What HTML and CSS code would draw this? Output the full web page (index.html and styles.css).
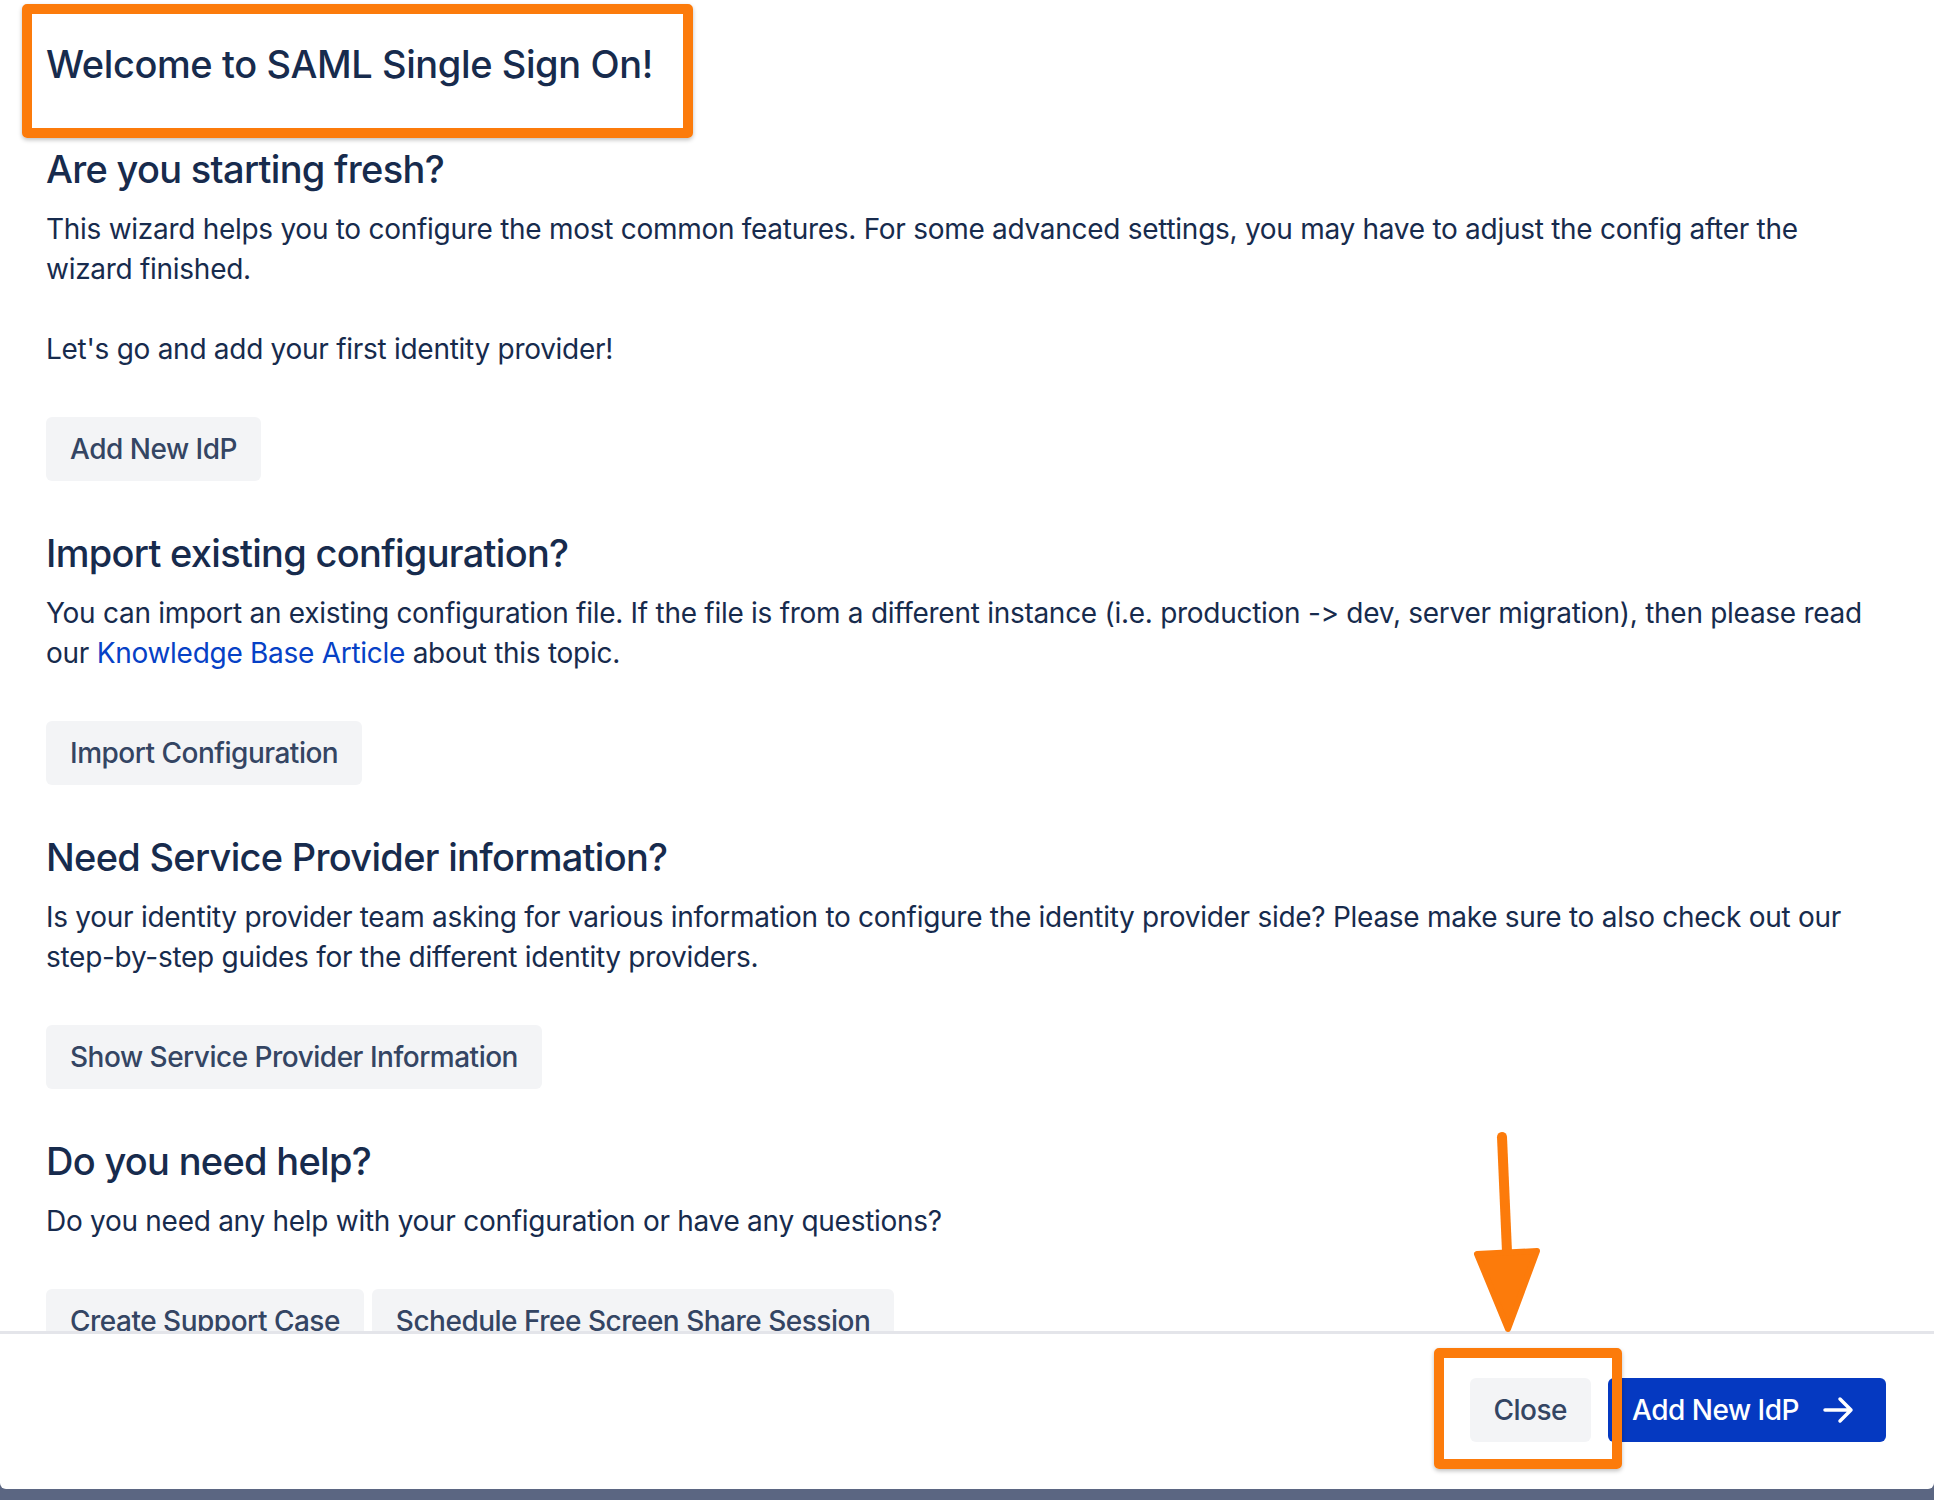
FILE: index.html
```html
<!DOCTYPE html>
<html lang="en">
<head>
    <meta charset="UTF-8">
    <title>SAML Single Sign On</title>
    <link rel="stylesheet" href="styles.css">
</head>
<body>
<div class="modal">
    <div class="modal-header">
        <h1 class="modal-title">Welcome to SAML Single Sign On!</h1>
    </div>

    <div class="modal-body">
        <section class="step">
            <h2>Are you starting fresh?</h2>
            <p>This wizard helps you to configure the most common features. For some advanced settings, you may have to adjust the config after the wizard finished.<br><br>Let's go and add your first identity provider!</p>
            <div class="actions">
                <button class="btn">Add New IdP</button>
            </div>
        </section>

        <section class="step">
            <h2>Import existing configuration?</h2>
            <p>You can import an existing configuration file. If the file is from a different instance (i.e. production -&gt; dev, server migration), then please read our <a href="#">Knowledge Base Article</a> about this topic.</p>
            <div class="actions">
                <button class="btn">Import Configuration</button>
            </div>
        </section>

        <section class="step">
            <h2>Need Service Provider information?</h2>
            <p>Is your identity provider team asking for various information to configure the identity provider side? Please make sure to also check out our step-by-step guides for the different identity providers.</p>
            <div class="actions">
                <button class="btn">Show Service Provider Information</button>
            </div>
        </section>

        <section class="step">
            <h2>Do you need help?</h2>
            <p>Do you need any help with your configuration or have any questions?</p>
            <div class="actions">
                <button class="btn">Create Support Case</button>
                <button class="btn">Schedule Free Screen Share Session</button>
            </div>
        </section>
    </div>

    <div class="modal-footer">
        <button class="btn">Close</button>
        <button class="btn btn-primary">Add New IdP
            <svg class="btn-icon" width="48" height="28" viewBox="0 0 48 28">
                <path d="M11 14H37M26 3L37 14L26 25" fill="none" stroke="#fff" stroke-width="3.5" stroke-linecap="round" stroke-linejoin="round"/>
            </svg>
        </button>
    </div>

    <!-- annotations -->
    <span class="mark mark-title"></span>
    <span class="mark mark-close"></span>
    <svg class="mark-arrow" width="85" height="215" viewBox="0 0 85 215">
        <path d="M37 10L42 125" stroke="#fc7b0b" stroke-width="10" stroke-linecap="round"/>
        <path d="M12 127L72 124L43 202Z" fill="#fc7b0b" stroke="#fc7b0b" stroke-width="6" stroke-linejoin="round"/>
    </svg>
</div>
</body>
</html>
```

FILE: styles.css
```css
* {
    margin: 0;
    padding: 0;
    box-sizing: border-box;
}
html, body {
    background: #5b6682;
}
body {
    font-family: Inter, "Noto Sans", sans-serif;
    font-feature-settings: "calt" 0;
    color: #172b4d;
}
.modal {
    position: relative;
    width: 1934px;
    height: 1489px;
    background: #fff;
    border-radius: 0 0 6px 6px;
    display: flex;
    flex-direction: column;
}
.modal-header {
    padding: 40px 46px 0;
}
.modal-title,
.step h2 {
    font-size: 38px;
    line-height: 48px;
    font-weight: 500;
    color: #172b4d;
}
.modal-title {
    letter-spacing: -0.4px;
}
.step h2 {
    letter-spacing: -0.7px;
}
.modal-body {
    height: 1243px;
    padding: 57px 48px 0 46px;
    overflow: hidden;
}
.step + .step {
    margin-top: 48px;
}
.step p {
    margin-top: 16px;
    font-size: 28px;
    line-height: 40px;
    letter-spacing: -0.28px;
}
.step a {
    color: #0641c6;
    text-decoration: none;
}
.actions {
    margin-top: 48px;
    display: flex;
    gap: 8px;
}
.btn {
    height: 64px;
    padding: 0 24px;
    border: none;
    border-radius: 6px;
    background: #f3f4f6;
    color: #344563;
    font-family: inherit;
    font-feature-settings: "calt" 0;
    font-size: 28px;
    font-weight: 500;
    letter-spacing: -0.5px;
    display: inline-flex;
    align-items: center;
}
.btn-primary {
    background: #0539c1;
    color: #fff;
}
.btn-icon {
    margin-left: 15px;
}
.modal-footer {
    flex: 1;
    border-top: 3px solid #e4e5ea;
    padding: 44px 48px 0;
    display: flex;
    justify-content: flex-end;
    gap: 17px;
}

/* orange annotations */
.mark {
    position: absolute;
    border: 10px solid #fc7b0b;
    border-radius: 5px;
    box-shadow: 0 2px 4px rgba(0, 0, 0, .25);
}
.mark-title {
    left: 22px;
    top: 4px;
    width: 671px;
    height: 134px;
}
.mark-close {
    left: 1434px;
    top: 1348px;
    width: 188px;
    height: 121px;
}
.mark-arrow {
    position: absolute;
    left: 1465px;
    top: 1127px;
}
```
